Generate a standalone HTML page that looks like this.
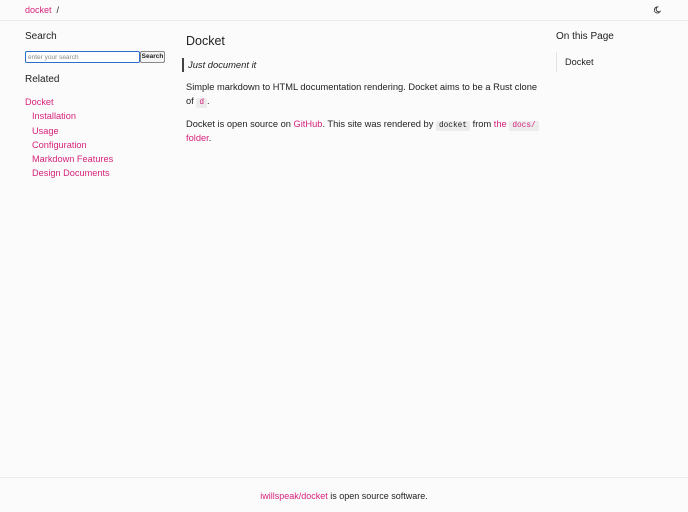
<!DOCTYPE html>
<html><head><meta charset="utf-8"><style>
*{margin:0;padding:0;box-sizing:border-box}
body{width:688px;height:512px;background:#fbfbfb;font-family:"Liberation Sans",sans-serif;color:#222;font-size:8.6px;position:relative;overflow:hidden}
a{color:#d6237b;text-decoration:none}
.abs{position:absolute;white-space:nowrap}
.hdr{position:absolute;left:0;top:0;width:688px;height:21px;border-bottom:1px solid #ececec}
.ftr{position:absolute;left:0;top:477px;width:688px;height:35px;border-top:1px solid #ececec}
h3{font-weight:normal;font-size:10px;color:#222}
code{font-family:"Liberation Mono",monospace;font-size:7.8px;background:#ececec;padding:0 3px;border-radius:2px;line-height:10px;display:inline-block}
.nav a{display:block;height:14.3px;line-height:14.3px}
p{line-height:14.3px;font-size:9.3px}
</style></head><body>
<div class="hdr"></div>
<div class="abs" style="left:25px;top:5px;font-size:9px"><a href="#">docket</a> &nbsp;/</div>
<svg class="abs" style="left:653px;top:6px" width="8" height="8" viewBox="0 0 8 8"><path d="M4.5 1A3 3 0 1 0 7 5.5 2.4 2.4 0 0 1 4.5 1Z" fill="none" stroke="#333" stroke-width="0.9"/></svg>

<h3 class="abs" style="left:25px;top:31px">Search</h3>
<div class="abs" style="left:25px;top:51px;width:115px;height:12px;border:1px solid #2a6fc9;border-radius:2px;background:#fff;font-size:6.5px;color:#888;padding:2px 2px;line-height:7px">enter your search</div>
<div class="abs" style="left:140px;top:51px;width:25px;height:12px;border:1px solid #888;border-radius:2px;background:#f4f4f4;font-size:6.5px;font-weight:bold;text-align:center;line-height:10px">Search</div>
<h3 class="abs" style="left:25px;top:74px">Related</h3>
<div class="abs nav" style="left:25px;top:95px;font-size:9.2px">
<a href="#">Docket</a>
<a href="#" style="padding-left:7px">Installation</a>
<a href="#" style="padding-left:7px">Usage</a>
<a href="#" style="padding-left:7px">Configuration</a>
<a href="#" style="padding-left:7px">Markdown Features</a>
<a href="#" style="padding-left:7px">Design Documents</a>
</div>

<div class="abs" style="left:186px;top:34px;font-size:12.5px;color:#222">Docket</div>
<div class="abs" style="left:182px;top:58px;height:14px;border-left:2px solid #444;padding-left:4px;font-style:italic;line-height:14px;font-size:9.4px">Just document it</div>
<p class="abs" style="left:186px;top:80px">Simple markdown to HTML documentation rendering. Docket aims to be a Rust clone<br>of <code style="color:#d6237b">d</code>.</p>
<p class="abs" style="left:186px;top:117px">Docket is open source on <a href="#">GitHub</a>. This site was rendered by <code>docket</code> from <a href="#">the <code style="color:#d6237b">docs/</code><br>folder</a>.</p>

<h3 class="abs" style="left:556px;top:31px">On this Page</h3>
<div class="abs" style="left:556px;top:52px;height:20px;border-left:1px solid #e4e4e4;padding-left:8px;line-height:20px;font-size:9.2px">Docket</div>

<div class="ftr"></div>
<div class="abs" style="left:0;width:688px;text-align:center;top:491px;font-size:9px"><a href="#">iwillspeak/docket</a> is open source software.</div>
</body></html>
